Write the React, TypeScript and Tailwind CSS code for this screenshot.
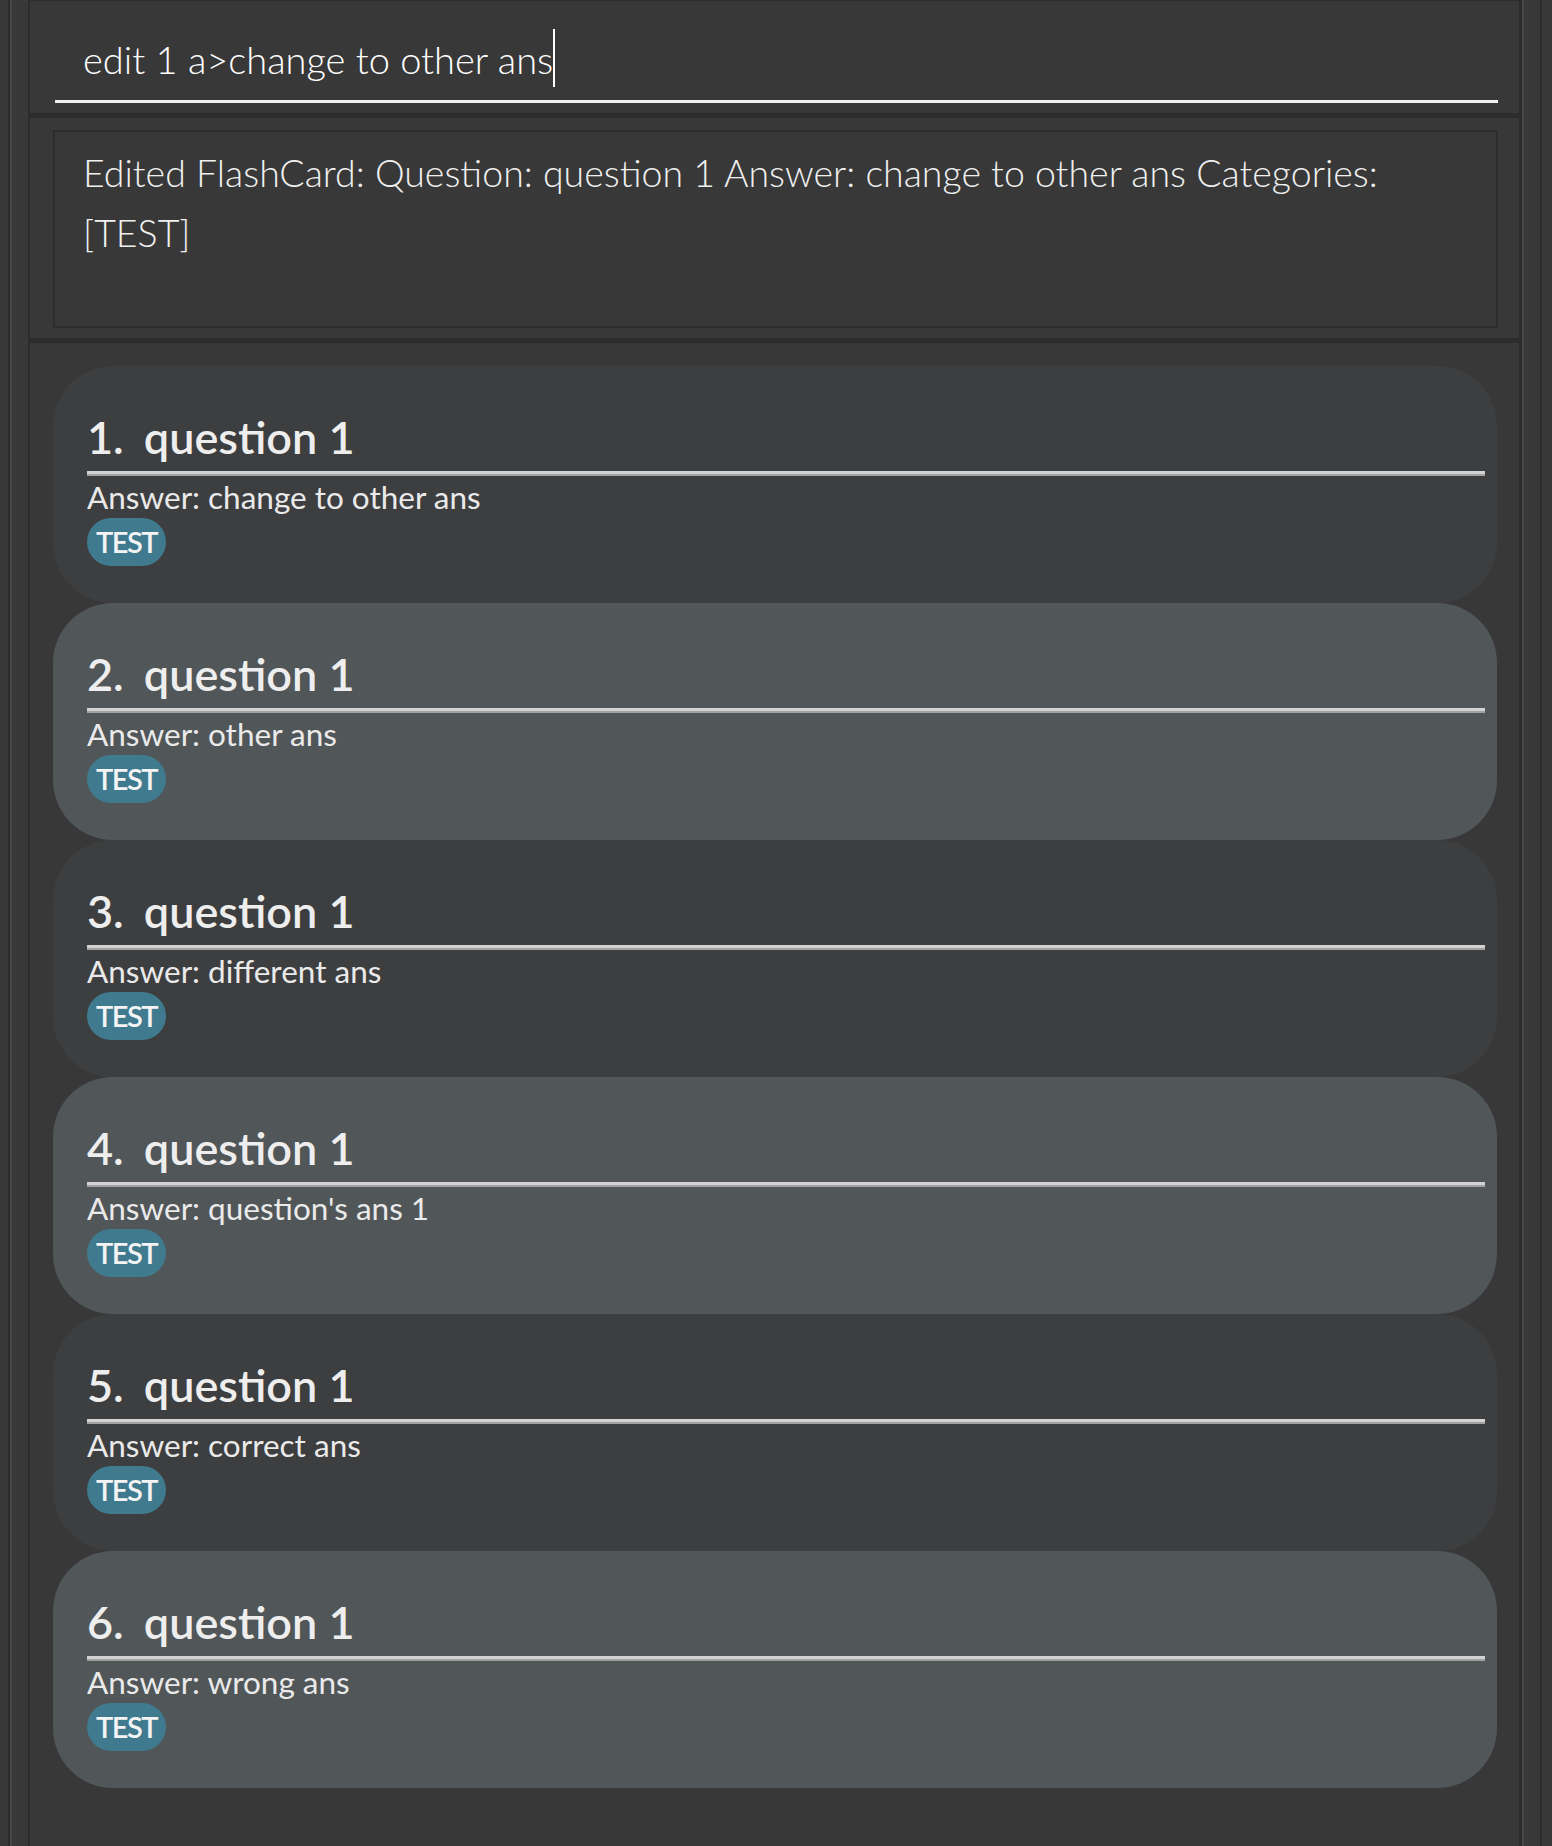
const cards = [
  { q: "question 1", a: "change to other ans", tags: ["TEST"] },
  { q: "question 1", a: "other ans", tags: ["TEST"] },
  { q: "question 1", a: "different ans", tags: ["TEST"] },
  { q: "question 1", a: "question's ans 1", tags: ["TEST"] },
  { q: "question 1", a: "correct ans", tags: ["TEST"] },
  { q: "question 1", a: "wrong ans", tags: ["TEST"] },
];

const font = { fontFamily: "Lato, 'Open Sans', sans-serif" };

function FlashCard({ index, q, a, tags }: { index: number; q: string; a: string; tags: string[] }) {
  const even = index % 2 === 0;
  return (
    <div
      className={`h-[237px] rounded-[60px] pl-[34px] pr-[12px] pt-[43px] ${even ? "bg-[#515659]" : "bg-[#3d3e40]"}`}
    >
      <div className="flex h-[56px] items-center gap-[20px] text-[45px] leading-[56px] font-semibold text-[#eeeeee]">
        <span>{index}.</span>
        <span>{q}</span>
      </div>
      <div className="mt-[6px] border-t-[3px] border-b-2 border-t-[#d2d2d2] border-b-[#a2a2a2]" />
      <div className="mt-[3px] text-[31.5px] leading-[37px] text-[#eaeaea]">Answer: {a}</div>
      <div className="mt-[2px] flex gap-2">
        {tags.map((t) => (
          <span
            key={t}
            className="flex h-[48px] items-center rounded-full bg-[#3f7a8f] px-[9px] text-[29px] font-semibold tracking-[-1.5px] text-[#f4f4f4]"
          >
            {t}
          </span>
        ))}
      </div>
    </div>
  );
}

export default function App() {
  return (
    <div className="flex h-[1846px] w-[1552px] bg-[#383838]" style={font}>
      <div className="w-[8px]" />
      <div className="w-[2px] bg-[#2c2c2c]" />
      <div className="w-[2px] bg-[#484848]" />
      <div className="w-[16px]" />

      <main className="flex w-[1494px] flex-col border-t border-l-2 border-r-[3px] border-[#2c2c2c]">
        <section className="h-[112px] pl-[25px] pr-[21px] pt-[33px]">
          <div className="flex h-[69px] border-b-[3px] border-[#f2f2f2] pl-[28px]">
            <span className="text-[38px] leading-[50px] font-light text-white">edit 1 a&gt;change to other ans</span>
            <span className="mt-[-5px] h-[58px] w-[2px] bg-white" />
          </div>
        </section>

        <div className="h-[5px] bg-[#2c2c2c]" />

        <section className="h-[220px] pl-[23px] pr-[21px] pt-[12px]">
          <div className="h-[198px] border-2 border-[#2d2d2d] pl-[28px] pr-[20px] pt-[11px] text-[37.5px] leading-[60px] font-light text-[#f0f0f0]">
            Edited FlashCard: Question: question 1 Answer: change to other ans Categories: [TEST]
          </div>
        </section>

        <div className="h-[5px] bg-[#2c2c2c]" />

        <section className="flex flex-col pl-[23px] pr-[22px] pt-[23px]">
          {cards.map((c, i) => (
            <FlashCard key={i} index={i + 1} q={c.q} a={c.a} tags={c.tags} />
          ))}
        </section>
      </main>

      <div className="w-[2px] bg-[#484848]" />
      <div className="w-[16px]" />
      <div className="w-[2px] bg-[#2c2c2c]" />
      <div className="flex-1" />
    </div>
  );
}
